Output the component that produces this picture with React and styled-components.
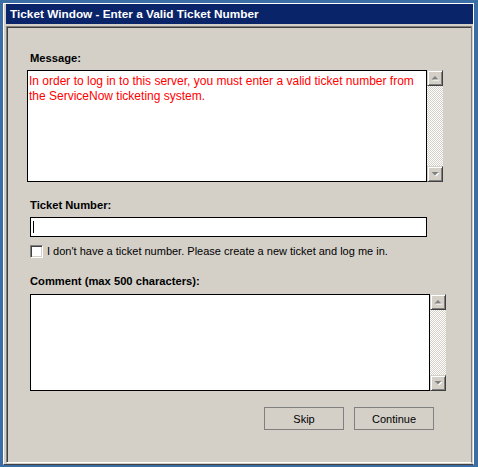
import styled, { createGlobalStyle } from "styled-components";

const GlobalStyle = createGlobalStyle`
  html, body {
    margin: 0;
    padding: 0;
    background: #3a6ea5;
  }
  * {
    box-sizing: border-box;
  }
`;

function Arrow({ dir }) {
  const pts = dir === "up" ? "4,1 7.5,4.5 0.5,4.5" : "0.5,1 7.5,1 4,4.5";
  const shadow = dir === "up" ? "5,2 8.5,5.5 1.5,5.5" : "1.5,2 8.5,2 5,5.5";
  return (
    <svg width="9" height="6" viewBox="0 0 9 6">
      <polygon points={shadow} fill="#ffffff" />
      <polygon points={pts} fill="#808080" />
    </svg>
  );
}

function ScrollBar({ height }) {
  return (
    <Scroll style={{ height }}>
      <ScrollButton>
        <Arrow dir="up" />
      </ScrollButton>
      <Track />
      <ScrollButton>
        <Arrow dir="down" />
      </ScrollButton>
    </Scroll>
  );
}

export default function App() {
  return (
    <>
      <GlobalStyle />
      <Desktop>
        <Window>
          <TitleBar>Ticket Window - Enter a Valid Ticket Number</TitleBar>
          <Panel>
            <Label $top={25}>Message:</Label>
            <BoxRow $shift={-3} $gap={5}>
              <TextBox $height={112}>
                <MessageText>
                  In order to log in to this server, you must enter a valid
                  ticket number from the ServiceNow ticketing system.
                </MessageText>
              </TextBox>
              <ScrollBar height={112} />
            </BoxRow>
            <Label $top={17}>Ticket Number:</Label>
            <TicketInput>
              <Caret />
            </TicketInput>
            <CheckRow>
              <CheckBox />
              <CheckLabel>
                I don't have a ticket number. Please create a new ticket and
                log me in.
              </CheckLabel>
            </CheckRow>
            <Label $top={17}>Comment (max 500 characters):</Label>
            <BoxRow $shift={0} $gap={6}>
              <TextBox $height={97} />
              <ScrollBar height={97} />
            </BoxRow>
            <ButtonRow>
              <Button>Skip</Button>
              <Button>Continue</Button>
            </ButtonRow>
          </Panel>
        </Window>
      </Desktop>
    </>
  );
}

const Desktop = styled.div`
  width: 478px;
  height: 467px;
  padding: 3px 0 0 3px;
  background: #3a6ea5;
  font-family: "Liberation Sans", Arial, sans-serif;
  font-size: 11px;
  color: #000;
`;

const Window = styled.div`
  width: 471px;
  height: 462px;
  display: flex;
  flex-direction: column;
  background: #d4d0c8;
  border-top: 1px solid #ffffff;
  border-left: 1px solid #ffffff;
  border-right: 1px solid #ffffff;
  border-bottom: 1px solid #404040;
  padding: 0 1px 1px 2px;
`;

const TitleBar = styled.div`
  height: 20px;
  margin-right: -1px;
  background: #0a246a;
  color: #ffffff;
  font-weight: bold;
  font-size: 11.8px;
  line-height: 21px;
  padding-left: 4px;
  margin-bottom: 2px;
  white-space: nowrap;
`;

const Panel = styled.div`
  flex: 1;
  display: flex;
  flex-direction: column;
  border-top: 1px solid #808080;
  border-left: 1px solid #808080;
  border-right: 1px solid #808080;
  border-bottom: 1px solid #ffffff;
  box-shadow: inset 1px 1px 0 #404040;
  padding-left: 23px;
`;

const Label = styled.div`
  margin-top: ${(p) => p.$top}px;
  font-weight: bold;
  font-size: 11.2px;
  line-height: 13px;
  white-space: nowrap;
`;

const BoxRow = styled.div`
  display: flex;
  margin-left: ${(p) => p.$shift}px;
  margin-top: ${(p) => p.$gap}px;
`;

const TextBox = styled.div`
  width: 400px;
  height: ${(p) => p.$height}px;
  background: #ffffff;
  border: 1px solid #000000;
  padding: 3px 1px;
`;

const MessageText = styled.div`
  color: #ff0000;
  font-size: 12px;
  line-height: 15px;
`;

const Scroll = styled.div`
  width: 16px;
  display: flex;
  flex-direction: column;
`;

const ScrollButton = styled.div`
  width: 16px;
  height: 16px;
  display: flex;
  align-items: center;
  justify-content: center;
  background: #d4d0c8;
  border-top: 1px solid #d4d0c8;
  border-left: 1px solid #d4d0c8;
  border-right: 1px solid #404040;
  border-bottom: 1px solid #404040;
  box-shadow: inset 1px 1px 0 #ffffff, inset -1px -1px 0 #808080;
`;

const Track = styled.div`
  flex: 1;
  background-color: #ffffff;
  background-image: repeating-conic-gradient(#d4d0c8 0 25%, #ffffff 0 50%);
  background-size: 2px 2px;
`;

const TicketInput = styled.div`
  width: 397px;
  height: 20px;
  margin-top: 5px;
  background: #ffffff;
  border: 1px solid #000000;
  display: flex;
  align-items: center;
  padding-left: 2px;
`;

const Caret = styled.span`
  width: 1px;
  height: 12px;
  background: #000000;
`;

const CheckRow = styled.div`
  display: flex;
  align-items: center;
  gap: 4px;
  margin-top: 8px;
`;

const CheckBox = styled.span`
  width: 13px;
  height: 13px;
  background: #ffffff;
  border-top: 1px solid #808080;
  border-left: 1px solid #808080;
  border-right: 1px solid #ffffff;
  border-bottom: 1px solid #ffffff;
  box-shadow: inset 1px 1px 0 #404040, inset -1px -1px 0 #d4d0c8;
`;

const CheckLabel = styled.span`
  line-height: 13px;
  white-space: nowrap;
`;

const ButtonRow = styled.div`
  display: flex;
  justify-content: flex-end;
  gap: 10px;
  margin-top: 16px;
  padding-right: 37px;
`;

const Button = styled.div`
  width: 80px;
  height: 23px;
  border: 1px solid #808080;
  display: flex;
  align-items: center;
  justify-content: center;
  background: #d4d0c8;
`;
